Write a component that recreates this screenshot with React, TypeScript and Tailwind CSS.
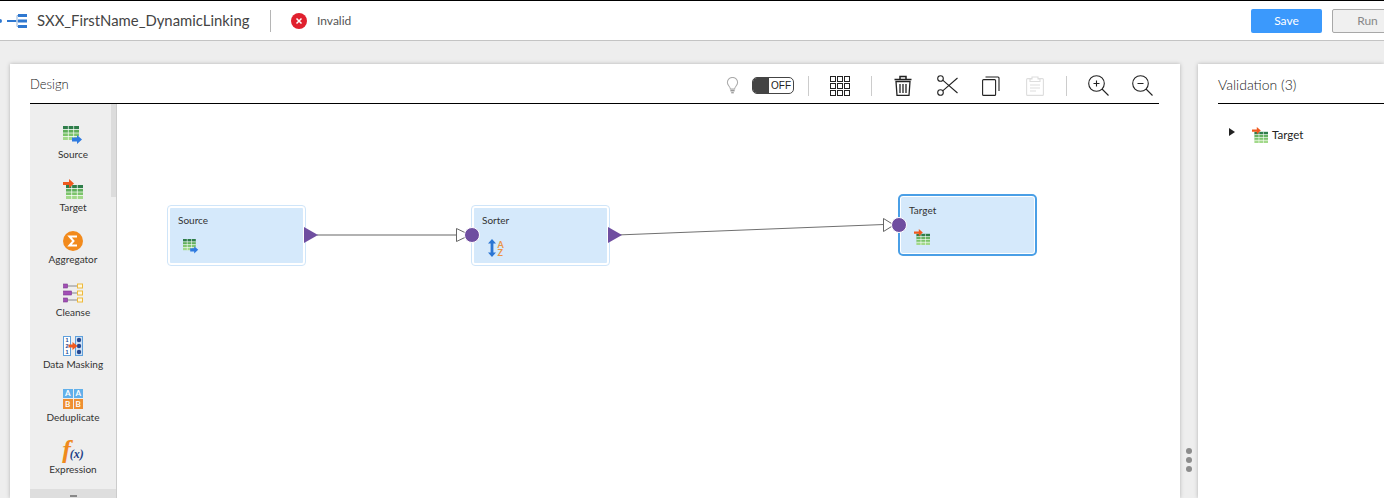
import { type ReactNode } from 'react';

function TableGrid({ x, y, w, h }: { x: number; y: number; w: number; h: number }) {
  const rowH = h / 4;
  const colW = w / 3;
  return (
    <g>
      <rect x={x} y={y} width={w} height={rowH} fill="#2e7d4a" />
      <rect x={x} y={y + rowH} width={w} height={rowH} fill="#5fae5a" />
      <rect x={x} y={y + rowH * 2} width={w} height={rowH} fill="#7cc46b" />
      <rect x={x} y={y + rowH * 3} width={w} height={rowH} fill="#a2d98a" />
      {[1, 2, 3].map((i) => (
        <line key={i} x1={x} x2={x + w} y1={y + rowH * i} y2={y + rowH * i} stroke="#fff" strokeWidth="0.7" />
      ))}
      {[1, 2].map((i) => (
        <line key={i} x1={x + colW * i} x2={x + colW * i} y1={y} y2={y + h} stroke="#fff" strokeWidth="0.7" />
      ))}
    </g>
  );
}

function SourceIcon({ size = 20 }: { size?: number }) {
  return (
    <svg width={size} height={size} viewBox="0 0 20 20">
      <TableGrid x={0} y={0} w={16} h={14} />
      <path d="M9 11.500h5V9l5 4.500-5 4.500v-2.500H9z" fill="#2f7be0" />
    </svg>
  );
}

function TargetIcon({ size = 20 }: { size?: number }) {
  return (
    <svg width={size} height={size} viewBox="0 0 20 20">
      <TableGrid x={3} y={6} w={17} h={14} />
      <path d="M0 3h6V0l5 4.500L6 9V6H0z" fill="#f0591e" />
    </svg>
  );
}

function AggregatorIcon() {
  return (
    <svg width="20" height="20" viewBox="0 0 20 20">
      <circle cx="10" cy="10" r="10" fill="#f28a1c" />
      <path d="M14 5.500H6.500L10.500 10l-4 4.500H14" fill="none" stroke="#fff" strokeWidth="2" />
    </svg>
  );
}

function CleanseIcon() {
  const rows = [
    { y: 1, w: 4 },
    { y: 8, w: 8 },
    { y: 15, w: 4 },
  ];
  return (
    <svg width="20" height="21" viewBox="0 0 20 21">
      {rows.map((r) => (
        <g key={r.y}>
          <line x1="1" x2="15" y1={r.y + 2} y2={r.y + 2} stroke="#8a8a8a" strokeWidth="1" />
          <rect x="0.500" y={r.y} width={r.w} height="4" fill="#a24fb5" stroke="#7d3a90" strokeWidth="0.6" />
          <rect x="14.500" y={r.y} width="5" height="4" fill="#fff8dc" stroke="#eeb93c" strokeWidth="1" />
        </g>
      ))}
    </svg>
  );
}

function MaskingIcon() {
  return (
    <svg width="20" height="20" viewBox="0 0 20 20">
      <rect x="0.500" y="0.500" width="7" height="19" fill="#fff" stroke="#5ea0dc" />
      <rect x="12.500" y="0.500" width="7" height="19" fill="#cfe2f5" stroke="#5ea0dc" />
      <text x="2.500" y="6" fontSize="5.500" fontWeight="700" fill="#27478f" fontFamily="Liberation Sans, sans-serif">1</text>
      <text x="2.500" y="12" fontSize="5.500" fontWeight="700" fill="#27478f" fontFamily="Liberation Sans, sans-serif">2</text>
      <text x="2.500" y="18" fontSize="5.500" fontWeight="700" fill="#27478f" fontFamily="Liberation Sans, sans-serif">1</text>
      <circle cx="16" cy="4" r="2.200" fill="#27478f" />
      <circle cx="16" cy="10" r="2.200" fill="#27478f" />
      <circle cx="16" cy="16" r="2.200" fill="#27478f" />
      <path d="M5.500 8.500h4V6l5 4-5 4v-2.500h-4z" fill="#f0591e" />
    </svg>
  );
}

function DeduplicateIcon() {
  const cells = ['A', 'A', 'B', 'B'];
  return (
    <div className="grid grid-cols-2 gap-px w-5 h-5">
      {cells.map((c, i) => (
        <div
          key={i}
          className={`flex items-center justify-center text-white text-[8px] leading-none font-bold ${c === 'A' ? 'bg-[#62b0ea]' : 'bg-[#ee8f32]'}`}
        >
          {c}
        </div>
      ))}
    </div>
  );
}

function ExpressionIcon() {
  return (
    <div className="flex items-end h-[22px] font-['Liberation_Serif',serif] italic leading-none">
      <span className="text-[26px] text-[#ef8a1d] font-bold leading-[22px]">f</span>
      <span className="text-[12px] text-[#1d3f86] font-bold -ml-[1px] mb-[1px]">(x)</span>
    </div>
  );
}

function SorterIcon() {
  return (
    <svg width="18" height="18" viewBox="0 0 18 18">
      <path d="M5 0l4 4.500H6.400v9H9L5 18l-4-4.500h2.600v-9H1z" fill="#2a75d3" />
      <text x="10.500" y="8.500" fontSize="9" fill="#ea9444" fontFamily="Lato, sans-serif" fontWeight="700">A</text>
      <text x="10.500" y="17" fontSize="9" fill="#ea9444" fontFamily="Lato, sans-serif" fontWeight="700">Z</text>
    </svg>
  );
}

function PaletteItem({ icon, label }: { icon: ReactNode; label: string }) {
  return (
    <div className="h-[52.500px] flex flex-col items-center">
      <div className="h-[25px] flex items-end">{icon}</div>
      <div className="mt-[1px] text-[10px] leading-[14px] text-[#333]">{label}</div>
    </div>
  );
}

function Node({ title, icon, className }: { title: string; icon: ReactNode; className: string }) {
  return (
    <div className={`absolute rounded-[3px] bg-[#d5e9fb] ${className}`}>
      <div className="text-[10px] leading-[13px] text-[#333]">{title}</div>
      <div className="mt-[12px] ml-[5px]">{icon}</div>
    </div>
  );
}

function ToolIcon({ className, children }: { className: string; children: ReactNode }) {
  return <div className={`flex items-center justify-center w-[24px] h-[24px] ${className}`}>{children}</div>;
}

function Sep({ className }: { className: string }) {
  return <div className={`w-px h-[20px] bg-[#ccc] ${className}`} />;
}

export default function App() {
  return (
    <div className="w-[1384px] h-[498px] overflow-hidden bg-[#eeeeee] font-['Lato',sans-serif] text-[#222] flex flex-col">
      {/* top bar */}
      <header className="h-[41px] shrink-0 bg-white border-t border-t-black border-b border-b-[#c4c4c4] flex items-center">
        <div className="w-[2px] h-[4px] rounded-r-full bg-[#2f78d0] mr-[5px]" />
        <svg width="20" height="16" viewBox="0 0 20 16" className="shrink-0">
          <path d="M0 8h9" stroke="#2f78d0" strokeWidth="2" />
          <path d="M9 8h2M10 2.500v11M10 2.500h2M10 13.500h2" stroke="#8fb2da" strokeWidth="1" />
          <rect x="11" y="1" width="9" height="3" fill="#2f78d0" />
          <rect x="11" y="6.500" width="9" height="3" fill="#2f78d0" />
          <rect x="11" y="12" width="9" height="3" fill="#2f78d0" />
        </svg>
        <div className="ml-[10px] w-[233px] text-[14.850px] text-[#444] whitespace-nowrap">SXX_FirstName_DynamicLinking</div>
        <div className="w-px h-[22px] bg-[#b5b5b5]" />
        <svg width="16" height="16" viewBox="0 0 16 16" className="ml-[20px] shrink-0">
          <circle cx="8" cy="8" r="8" fill="#e0202e" />
          <path d="M5.500 5.500l5 5M10.500 5.500l-5 5" stroke="#fff" strokeWidth="1.500" />
        </svg>
        <div className="ml-[10px] text-[12px] text-[#555]">Invalid</div>
        <button className="ml-auto w-[71px] h-[24px] rounded-[2px] bg-[#3b99fc] text-white text-[12px]">Save</button>
        <button className="ml-[10px] mr-[-19px] w-[71px] h-[24px] rounded-[2px] bg-[#f0f0f0] border border-[#a8a8a8] text-[#888] text-[12px]">Run</button>
      </header>

      <main className="flex-1 min-h-0 flex pl-[10px] pt-[23px]">
        {/* design panel */}
        <section className="w-[1170px] bg-white shadow-[0_0_4px_rgba(0,0,0,0.25)] pl-[20px] pr-[21px] flex flex-col">
          <div className="h-[40px] shrink-0 border-b border-black flex items-center">
            <div className="text-[13px] pt-[3px] font-light">Design</div>
            <div className="ml-auto flex items-center h-full pt-[4px]">
              <svg width="13" height="17" viewBox="0 0 14 20" fill="none" stroke="#aaa" strokeWidth="1.200" className="mr-[1px]">
                <path d="M4.500 14c0-2.500-3.500-4-3.500-7.500a6 6 0 0 1 12 0C13 10 9.500 11.500 9.500 14z" />
                <path d="M4.500 16h5" stroke="#999" strokeWidth="2" />
                <path d="M5.500 18.500h3" stroke="#999" strokeWidth="1.500" />
              </svg>
              <div className="ml-[12px] w-[42px] h-[17px] rounded-[5px] border border-[#444] flex overflow-hidden">
                <div className="w-[16px] bg-[#444]" />
                <div className="flex-1 text-center text-[10px] leading-[15px] font-['Liberation_Sans',sans-serif] text-[#222]">OFF</div>
              </div>
              <Sep className="ml-[14px]" />
              <ToolIcon className="ml-[19px]">
                <svg width="20" height="20" viewBox="0 0 20 20" fill="none" stroke="#222" strokeWidth="1">
                  {[0.500, 7.500, 14.500].flatMap((y) =>
                    [0.500, 7.500, 14.500].map((x) => <rect key={`${x}-${y}`} x={x} y={y} width="5" height="5" />),
                  )}
                </svg>
              </ToolIcon>
              <Sep className="ml-[19px]" />
              <ToolIcon className="ml-[19px]">
                <svg width="18" height="21" viewBox="0 0 18 21" fill="none" stroke="#222" strokeWidth="1">
                  <path d="M0.500 4.500h17M6 4V1.500h6V4" strokeWidth="1.500" />
                  <path d="M2 6.500l1 14h12l1-14z" strokeWidth="1.300" />
                  <path d="M6 9v9M9 9v9M12 9v9" strokeWidth="1.300" />
                </svg>
              </ToolIcon>
              <ToolIcon className="ml-[20px]">
                <svg width="21" height="21" viewBox="0 0 21 21" fill="none" stroke="#222" strokeWidth="1.100">
                  <circle cx="3.500" cy="3.500" r="2.800" />
                  <circle cx="3.500" cy="17.500" r="2.800" />
                  <path d="M5.700 5.200L20.500 18M5.700 15.800L20.500 3" />
                </svg>
              </ToolIcon>
              <ToolIcon className="ml-[20px]">
                <svg width="18" height="20" viewBox="0 0 18 20" fill="none" stroke="#222" strokeWidth="1.100">
                  <rect x="0.600" y="3.600" width="13" height="15.800" rx="1" />
                  <path d="M4 1h12.500a1 1 0 0 1 1 1v13" transform="translate(-0.500 0)" />
                </svg>
              </ToolIcon>
              <ToolIcon className="ml-[20px]">
                <svg width="18" height="20" viewBox="0 0 18 20" fill="none" stroke="#ddd" strokeWidth="1.100">
                  <rect x="0.600" y="2.600" width="16.800" height="16.800" rx="1" />
                  <path d="M6 3V1h6v2h2v2.500H4V3z" fill="#fff" />
                  <path d="M4 9h10M4 12h10M4 15h6" />
                </svg>
              </ToolIcon>
              <Sep className="ml-[19px]" />
              <ToolIcon className="ml-[19px]">
                <svg width="21" height="21" viewBox="0 0 21 21" fill="none" stroke="#222" strokeWidth="1.100">
                  <circle cx="8.500" cy="8.500" r="7.800" />
                  <path d="M14 14l6.500 6.500M5.500 8.500h6M8.500 5.500v6" />
                </svg>
              </ToolIcon>
              <ToolIcon className="ml-[20px] mr-[5px]">
                <svg width="21" height="21" viewBox="0 0 21 21" fill="none" stroke="#222" strokeWidth="1.100">
                  <circle cx="8.500" cy="8.500" r="7.800" />
                  <path d="M14 14l6.500 6.500M5.500 8.500h6" />
                </svg>
              </ToolIcon>
            </div>
          </div>

          <div className="flex-1 min-h-0 flex">
            {/* transformation palette */}
            <aside className="w-[87px] shrink-0 bg-[#eeeeee] border-r border-[#ccc] relative overflow-hidden pt-[17px]">
              <div className="absolute right-0 top-0 w-[5px] h-[93px] bg-[#dcdcdc]" />
              <PaletteItem icon={<SourceIcon />} label="Source" />
              <PaletteItem icon={<TargetIcon />} label="Target" />
              <PaletteItem icon={<AggregatorIcon />} label="Aggregator" />
              <PaletteItem icon={<CleanseIcon />} label="Cleanse" />
              <PaletteItem icon={<MaskingIcon />} label="Data Masking" />
              <PaletteItem icon={<DeduplicateIcon />} label="Deduplicate" />
              <PaletteItem icon={<ExpressionIcon />} label="Expression" />
              <div className="h-[20px] bg-[#dedede] flex justify-center pt-[6px]">
                <div className="w-[7px] h-[2px] bg-[#888]" />
              </div>
            </aside>

            {/* canvas */}
            <div className="flex-1 relative">
              <Node
                title="Source"
                icon={<SourceIcon size={16} />}
                className="left-[51px] top-[102px] w-[137px] h-[59px] border-2 border-white outline outline-[#cfe5f9] px-[8px] pt-[6px]"
              />
              <Node
                title="Sorter"
                icon={<SorterIcon />}
                className="left-[355px] top-[102px] w-[137px] h-[59px] border-2 border-white outline outline-[#cfe5f9] px-[8px] pt-[6px]"
              />
              <Node
                title="Target"
                icon={<TargetIcon size={16} />}
                className="left-[783px] top-[92px] w-[135px] h-[58px] border border-white outline-2 outline-[#4a9fe6] px-[8px] pt-[7px]"
              />
              <svg className="absolute left-0 top-0" width="1042" height="394" fill="none">
                <path d="M200 131H340" stroke="#999" strokeWidth="1.500" />
                <path d="M500 131L767 120.500" stroke="#707070" strokeWidth="1" />
                <path d="M187 123L201 131l-14 8z" fill="#6f4ea0" />
                <path d="M491 123L505 131l-14 8z" fill="#6f4ea0" />
                <path d="M339.500 124.500L353 131l-13.500 6.500z" fill="#fff" stroke="#666" />
                <path d="M766.500 114.500L777 121l-10.500 6.500z" fill="#fff" stroke="#666" />
              </svg>
              <div className="absolute left-[347px] top-[123px] w-[16px] h-[16px] rounded-full bg-[#6f4ea0] border border-white" />
              <div className="absolute left-[774px] top-[113px] w-[16px] h-[16px] rounded-full bg-[#6f4ea0] border border-white" />
            </div>
          </div>
        </section>

        {/* splitter */}
        <div className="w-[18px] shrink-0 flex flex-col items-center justify-end gap-[3px] pb-[26px] pr-[1px]">
          <div className="w-[6px] h-[6px] rounded-full bg-[#8c8c8c]" />
          <div className="w-[6px] h-[6px] rounded-full bg-[#8c8c8c]" />
          <div className="w-[6px] h-[6px] rounded-full bg-[#8c8c8c]" />
        </div>

        {/* validation panel */}
        <section className="flex-1 bg-white shadow-[0_0_4px_rgba(0,0,0,0.25)] pl-[20px]">
          <div className="h-[40px] border-b border-black flex items-center text-[14px] font-light pt-[1px]">Validation (3)</div>
          <div className="flex items-center mt-[22px] pl-[11px]">
            <svg width="6" height="8" viewBox="0 0 6 8" className="mb-[5px]">
              <path d="M0 0l6 4-6 4z" fill="#222" />
            </svg>
            <div className="ml-[17px]"><TargetIcon size={16} /></div>
            <div className="ml-[4px] text-[11.500px]">Target</div>
          </div>
        </section>
      </main>
    </div>
  );
}
